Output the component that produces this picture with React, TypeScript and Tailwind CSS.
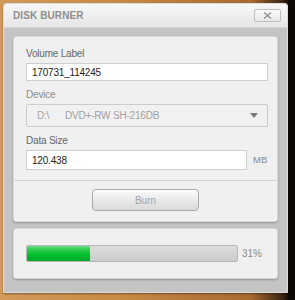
const font = { fontFamily: '"Liberation Sans", Arial, sans-serif' };

function Field({ label, dim, children }: { label: string; dim?: boolean; children: React.ReactNode }) {
  return (
    <div className="flex flex-col">
      <span className={`text-[10px] tracking-[-0.2px] leading-[13px] ${dim ? "text-[#8c8c8c]" : "text-[#666]"}`}>{label}</span>
      {children}
    </div>
  );
}

export default function App() {
  return (
    <div
      className="w-[295px] h-[300px] pt-[3px] pl-[3px] bg-[linear-gradient(to_right,#d29a58_0%,#c88a45_40%,#a86a30_85%,#3a2412_96%,#0b0806_98%)]"
      style={font}
    >
      <div className="w-[285px] h-[290px] flex flex-col rounded-t-[3px] border border-[#dcdcdc] bg-[#c4c4c4] shadow-[0_1px_2px_rgba(0,0,0,0.4)]">
        {/* title bar */}
        <div className="h-[24px] flex items-center justify-between pl-[9px] pr-[6px] rounded-t-[3px] bg-[linear-gradient(#f7f7f7,#e6e6e6)] border-b border-[#d6d6d6]">
          <span className="text-[10px] font-bold tracking-[0.1px] text-[#8e8e8e]">DISK BURNER</span>
          <button className="w-[27px] h-[13px] flex items-center justify-center rounded-[2px] border border-[#bdbdbd] bg-[linear-gradient(#fafafa,#e8e8e8)]">
            <svg width="9" height="7" viewBox="0 0 9 7">
              <path d="M1 0.5 L8 6.5 M8 0.5 L1 6.5" stroke="#8a8a8a" strokeWidth="1.1" />
            </svg>
          </button>
        </div>

        <div className="flex-1 flex flex-col gap-[6px] pt-[8px] px-[9px]">
          {/* form panel */}
          <div className="h-[186px] flex flex-col rounded-[3px] bg-[#f0f0f0] border border-[#d8d8d8] shadow-[0_1px_2px_rgba(0,0,0,0.25)]">
            <div className="flex flex-col gap-[7px] pt-[10px] pl-[12px] pr-[9px]">
              <Field label="Volume Label">
                <div className="mt-[3px] h-[18px] flex items-center pl-[5px] bg-white border border-[#cfcfcf] text-[10px] tracking-[-0.2px] text-[#222]">
                  170731_114245
                </div>
              </Field>
              <Field label="Device" dim>
                <div className="mt-[3px] h-[23px] flex items-center pl-[10px] pr-[9px] bg-[#f1f1f1] border border-[#cbcbcb] rounded-[2px] text-[10px] tracking-[-0.2px] text-[#a2a2a2]">
                  <span className="w-[28px]">D:\</span>
                  <span className="flex-1">DVD+-RW SH-216DB</span>
                  <svg width="8" height="5" viewBox="0 0 8 5">
                    <path d="M0 0 H8 L4 5 Z" fill="#7a7a7a" />
                  </svg>
                </div>
              </Field>
              <Field label="Data Size">
                <div className="mt-[3px] flex items-center gap-[6px]">
                  <div className="w-[221px] h-[20px] flex items-center pl-[5px] bg-white border border-[#cfcfcf] text-[10px] tracking-[-0.2px] text-[#222]">
                    120.438
                  </div>
                  <span className="text-[9.5px] text-[#8a8a8a]">MB</span>
                </div>
              </Field>
            </div>
            <div className="mt-[10px] border-t border-[#d2d2d2] flex justify-center pt-[8px]">
              <button className="w-[107px] h-[22px] rounded-[4px] border border-[#a9a9a9] bg-[linear-gradient(#fbfbfb,#e9e9e9_50%,#dadada)] text-[10px] text-[#a5a5a5] shadow-[inset_0_1px_0_#fff]">
                Burn
              </button>
            </div>
          </div>

          {/* progress panel */}
          <div className="h-[51px] flex items-center pl-[12px] gap-[4px] rounded-[3px] bg-[#f0f0f0] border border-[#d8d8d8] shadow-[0_1px_2px_rgba(0,0,0,0.25)]">
            <div className="w-[212px] h-[17px] flex rounded-[2px] border border-[#b8b8b8] bg-[linear-gradient(#dedede,#cbcbcb)] overflow-hidden">
              <div className="w-[63px] h-full bg-[linear-gradient(#6fe08a_0%,#2ccc4c_25%,#00bf2e_60%,#00a828)]" />
            </div>
            <span className="text-[10px] text-[#8a8a8a]">31%</span>
          </div>
        </div>
      </div>
    </div>
  );
}
